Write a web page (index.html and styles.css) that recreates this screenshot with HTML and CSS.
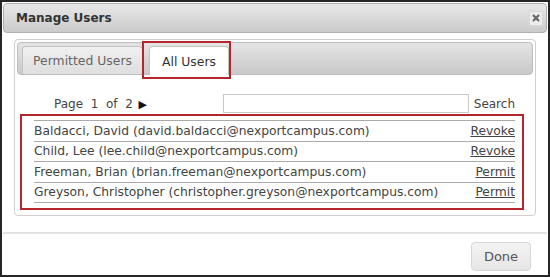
FILE: index.html
```html
<!DOCTYPE html>
<html>
<head>
<meta charset="utf-8">
<link rel="stylesheet" href="styles.css">
</head>
<body>
<div class="dialog">
  <div class="titlebar">
    <span class="title">Manage Users</span>
    <span class="close">
      <svg width="8" height="8" viewBox="0 0 8 8"><path d="M1 1 L7 7 M7 1 L1 7" stroke="#666" stroke-width="2.2" stroke-linecap="butt"/></svg>
    </span>
  </div>
  <div class="panel">
    <div class="tabbar">
      <div class="tab">Permitted Users</div>
      <div class="tab active">All Users<span class="highlight"></span></div>
    </div>
    <div class="toolbar">
      <span class="pager">Page&nbsp; 1&nbsp; of&nbsp; 2 <span class="arrow">&#9654;</span></span>
      <input class="search-input" type="text">
      <span class="search-label">Search</span>
    </div>
    <div class="list">
      <div class="row"><span>Baldacci, David (david.baldacci@nexportcampus.com)</span><a href="#">Revoke</a></div>
      <div class="row"><span>Child, Lee (lee.child@nexportcampus.com)</span><a href="#">Revoke</a></div>
      <div class="row"><span>Freeman, Brian (brian.freeman@nexportcampus.com)</span><a href="#">Permit</a></div>
      <div class="row"><span>Greyson, Christopher (christopher.greyson@nexportcampus.com)</span><a href="#">Permit</a></div>
    </div>
  </div>
  <div class="footer">
    <button class="done">Done</button>
  </div>
</div>
</body>
</html>
```
FILE: styles.css
```css
html, body {
  margin: 0;
  padding: 0;
  background: #fff;
}
.dialog {
  width: 550px;
  height: 277px;
  box-sizing: border-box;
  border: 2px solid #262626;
  padding: 1px;
  background: #fff;
  font-family: "DejaVu Sans", Verdana, sans-serif;
  font-size: 12px;
  color: #444;
}
.titlebar {
  height: 28px;
  border: 1px solid #b0b0b0;
  border-radius: 4px;
  background: linear-gradient(#e8e8e8, #cbcbcb);
  display: flex;
  align-items: center;
  justify-content: space-between;
  padding: 0 3px 0 12px;
}
.title {
  font-weight: bold;
  font-size: 12px;
  color: #333;
}
.close {
  width: 14px;
  height: 15px;
  box-sizing: border-box;
  border: 1px solid #d8d8d8;
  border-radius: 2px;
  background: #ececec;
  display: flex;
  align-items: center;
  justify-content: center;
}
.panel {
  margin: 6px 11px 0;
  border: 1px solid #cfcfcf;
  border-radius: 4px;
  padding: 2px 2px 5px;
}
.tabbar {
  height: 31px;
  border: 1px solid #bdbdbd;
  border-radius: 4px;
  background: linear-gradient(#e4e4e4, #c9c9c9);
  display: flex;
  align-items: flex-end;
  gap: 6px;
  padding-left: 4px;
}
.tab {
  position: relative;
  width: 121px;
  height: 28px;
  box-sizing: border-box;
  border: 1px solid #c4c4c4;
  border-bottom: none;
  border-radius: 4px 4px 0 0;
  background: linear-gradient(#f0f0f0, #dedede);
  display: flex;
  align-items: center;
  justify-content: center;
  color: #666;
  font-size: 12.4px;
}
.tab.active {
  width: 80px;
  background: #fff;
  color: #333;
  height: 29px;
  margin-bottom: -1px;
}
.highlight {
  position: absolute;
  left: -8px;
  top: -6px;
  right: -3px;
  bottom: -4px;
  border: 2px solid #b3262c;
}
.toolbar {
  display: flex;
  align-items: center;
  height: 19px;
  margin-top: 19px;
  padding: 0 18px 0 37px;
}
.pager {
  color: #444;
}
.arrow {
  font-size: 11px;
  color: #111;
  margin-left: 2px;
}
.search-input {
  margin: 0 0 0 auto;
  width: 246px;
  height: 19px;
  box-sizing: border-box;
  border: 1px solid #c8c8c8;
  padding: 0;
}
.search-label {
  margin-left: 5px;
  color: #444;
}
.list {
  margin: 1px 9px 0 3px;
  border: 2px solid #b3262c;
  padding: 4px 7px 5px 12px;
}
.row {
  height: 19.5px;
  border-top: 1px solid #aaa;
  display: flex;
  align-items: center;
  justify-content: space-between;
  color: #444;
  font-size: 12.3px;
}
.row:last-child {
  border-bottom: 1px solid #aaa;
}
.row a {
  color: #444;
  text-decoration: underline;
}
.footer {
  margin-top: 16px;
  border-top: 2px solid #e2e2e2;
  display: flex;
  justify-content: flex-end;
  padding: 8px 16px 0;
}
.done {
  width: 60px;
  height: 29px;
  border: 1px solid #d6d6d6;
  border-radius: 4px;
  background: linear-gradient(#f3f3f3, #e6e6e6);
  font-family: "DejaVu Sans", Verdana, sans-serif;
  font-size: 13px;
  color: #555;
  padding: 0;
}
```
